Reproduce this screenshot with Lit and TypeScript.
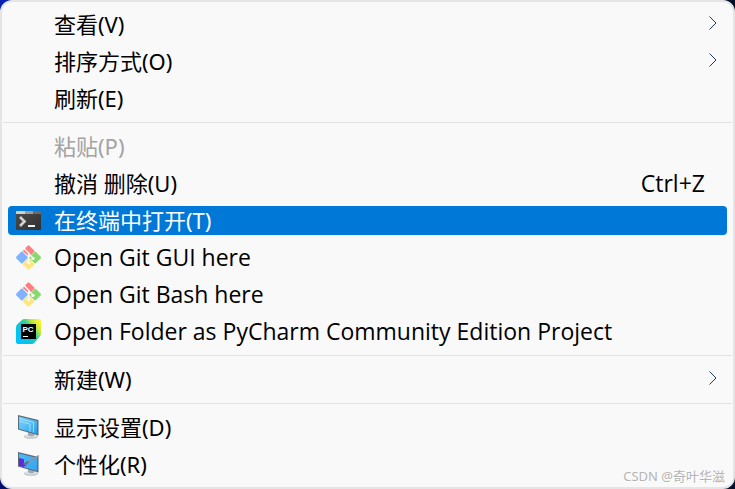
import { LitElement, html, css, svg, nothing, TemplateResult } from "lit";
import { customElement, state } from "lit/decorators.js";
import { classMap } from "lit/directives/class-map.js";

interface MenuEntry {
  label: string;
  icon?: TemplateResult;
  shortcut?: string;
  submenu?: boolean;
  disabled?: boolean;
  latin?: boolean;
}

const terminalIcon = svg`
  <defs>
    <linearGradient id="term" x1="0" y1="0" x2="1" y2="1">
      <stop offset="0" stop-color="#4d4d4d"/><stop offset="1" stop-color="#2f2f2f"/>
    </linearGradient>
  </defs>
  <rect x="0" y="3" width="25" height="19" rx="1" fill="url(#term)"/>
  <path d="M1 3h8v3H0V4a1 1 0 0 1 1-1z" fill="#d0d0d0"/>
  <path d="M9 3h8v3H9z" fill="#9b9b9b"/>
  <path d="M17 3h7a1 1 0 0 1 1 1v2h-8z" fill="#6b6b6b"/>
  <path d="M4 9L8.500 13.500L4 18" fill="none" stroke="#d2d2d2" stroke-width="2.600"/>
  <path d="M12 17h7v2h-7z" fill="#f2f2f2"/>`;

const gitIcon = svg`
  <path d="M6.300 6.600L12.200 12.500L6.300 18.400Q5.700 18.800 5.100 18.200L.4 13.400Q-.2 12.500 .4 11.600L5.100 6.800Q5.700 6.200 6.300 6.600z" fill="#80b3ff"/>
  <path d="M9.300 3.100L11.600 .7Q12.500 -.1 13.400 .7L18.300 5.600Q18.800 6.300 18.200 6.900L14.300 10.800L13.600 8.200L9.300 4.800z" fill="#ff8080"/>
  <path d="M8.200 4.400L12.400 8.600V11.300L6.700 6z" fill="#ff8080"/>
  <path d="M19 6.700Q19.500 6.400 20 6.900L24.600 11.600Q25.200 12.500 24.600 13.400L19.900 18.100Q19.300 18.700 18.600 18.200L13 12.700z" fill="#87d96c"/>
  <path d="M12.500 13L18.200 18.700Q18.700 19.300 18.200 19.900L13.400 24.300Q12.500 25.100 11.600 24.300L6.900 19.800Q6.400 19.200 6.800 18.700z" fill="#ffe680"/>
  <path d="M8 3.500L12.500 8V17M12.500 8.500L17 13" fill="none" stroke="#f9f9f9" stroke-width="1.300"/>
  <circle cx="17" cy="13.400" r="1.700" fill="#f9f9f9"/>
  <circle cx="12.500" cy="17.600" r="1.700" fill="#f9f9f9"/>`;

const pycharmIcon = svg`
  <defs>
    <linearGradient id="pc" x1=".15" y1=".75" x2=".95" y2=".15">
      <stop offset="0" stop-color="#00c4f8"/><stop offset=".3" stop-color="#10c5d4"/>
      <stop offset=".55" stop-color="#34cf9c"/><stop offset=".78" stop-color="#c0e63c"/>
      <stop offset="1" stop-color="#fcf232"/>
    </linearGradient>
  </defs>
  <path d="M0 8.500Q0 6.500 1.300 5.300L6 1Q7.200 0 8.700 0H23Q25 0 25 2V14.500Q25 16.100 24 17.200L18.500 23.700Q17.300 25 15.500 25H2Q0 25 0 23z" fill="url(#pc)"/>
  <rect x="5" y="5" width="15" height="15" fill="#000"/>
  <text x="6.500" y="13" class="mark">PC</text>
  <path d="M7 17h5v1h-5z" fill="#fff"/>`;

const screenBase = svg`
  <ellipse cx="15" cy="21.500" rx="7" ry="2.300" fill="#bfc5c9"/>
  <ellipse cx="15" cy="20.800" rx="6" ry="1.600" fill="#e1e5e7"/>
  <path d="M12 17l6 2v2q-3 1-6-.5z" fill="#a4abb0"/>`;

const displayIcon = svg`
  <defs>
    <linearGradient id="disp" x1="0" y1="0" x2="1" y2="1">
      <stop offset="0" stop-color="#79d3fb"/><stop offset=".5" stop-color="#54bcf4"/><stop offset="1" stop-color="#289de8"/>
    </linearGradient>
  </defs>
  ${screenBase}
  <path d="M2 0L22.500 5V20.500L2 14.500z" fill="#596b78"/>
  <path d="M3 1.500L21.200 6V19L3 13.700z" fill="url(#disp)"/>
  <path d="M3.500 3.800L17.500 7.500V17.500M3.500 6.300L14 9V16.500" fill="none" stroke="#b2e8ff" stroke-width="1" opacity=".8"/>`;

const personalizeIcon = svg`
  <defs>
    <linearGradient id="pers" x1="0" y1="0" x2="1" y2="1">
      <stop offset="0" stop-color="#4dbcf6"/><stop offset="1" stop-color="#35a1ef"/>
    </linearGradient>
  </defs>
  ${screenBase}
  <path d="M2 0L22.500 5V20.500L2 14.500z" fill="#596b78"/>
  <path d="M3 1.500L21.200 6V19L3 13.700z" fill="url(#pers)"/>
  <path d="M3 6L8 7.200V11.500L11 12.500L7.500 15L3 13.700z" fill="#6d21dc"/>
  <path d="M7 12L22.500 3L23.300 4.200L9.500 12.800z" fill="#8b98a1"/>
  <path d="M7 12.200L12 9L12.800 10.500L9 12.700z" fill="#5f6670"/>`;

const groups: MenuEntry[][] = [
  [
    { label: "查看(V)", submenu: true },
    { label: "排序方式(O)", submenu: true },
    { label: "刷新(E)" },
  ],
  [
    { label: "粘贴(P)", disabled: true },
    { label: "撤消 删除(U)", shortcut: "Ctrl+Z" },
    { label: "在终端中打开(T)", icon: terminalIcon },
    { label: "Open Git GUI here", icon: gitIcon, latin: true },
    { label: "Open Git Bash here", icon: gitIcon, latin: true },
    { label: "Open Folder as PyCharm Community Edition Project", icon: pycharmIcon, latin: true },
  ],
  [{ label: "新建(W)", submenu: true }],
  [
    { label: "显示设置(D)", icon: displayIcon },
    { label: "个性化(R)", icon: personalizeIcon },
  ],
];

@customElement("app-root")
export class AppRoot extends LitElement {
  @state() private active = "在终端中打开(T)";

  static styles = css`
    :host {
      display: block;
      position: relative;
      background: linear-gradient(135deg, #0a20b4 0%, #0a20b4 8%, #050f6e 40%, #04102a 60%);
      font-family: "Noto Sans", "Noto Sans CJK SC", sans-serif;
      font-size: 22px;
      color: #000;
    }
    .menu {
      display: flex;
      flex-direction: column;
      box-sizing: border-box;
      padding: 4px 0;
      border: 2px solid #e5e5e5;
      border-radius: 12px;
      background: #f9f9f9;
    }
    .line {
      height: 1px;
      margin: 5px 1px;
      border: 0;
      background: #e2e2e2;
    }
    .item {
      display: flex;
      align-items: center;
      height: 29px;
      margin: 4px 6px;
      padding: 0 8px;
      border: 0;
      border-radius: 4px;
      background: none;
      color: inherit;
      font: inherit;
      line-height: 29px;
      text-align: left;
      white-space: nowrap;
    }
    .item.active {
      background: #0078d7;
      color: #fff;
    }
    .item:disabled {
      color: #a3a3a3;
    }
    .slot {
      flex: none;
      display: flex;
      width: 26px;
      margin-right: 12px;
    }
    .icon {
      width: 25px;
      height: 25px;
      overflow: visible;
    }
    .mark {
      font: bold 8px "Liberation Sans", sans-serif;
      fill: #fff;
    }
    .label {
      flex: 1;
    }
    .latin,
    .shortcut {
      font-family: "Open Sans", sans-serif;
      font-size: 23px;
    }
    .shortcut {
      margin-right: 14px;
    }
    .chevron {
      width: 8px;
      height: 14px;
      margin: 0 2px 3px 0;
      fill: none;
      stroke: #1c3a5c;
    }
    .watermark {
      position: absolute;
      right: 10px;
      bottom: 3px;
      font-size: 13px;
      line-height: 20px;
      color: #b4b4b4;
      text-shadow: 1px 1px 0 #fff;
      pointer-events: none;
    }
  `;

  private renderItem(entry: MenuEntry) {
    return html`<button
      class=${classMap({ item: true, active: entry.label === this.active })}
      role="menuitem"
      ?disabled=${entry.disabled}
      aria-haspopup=${entry.submenu ? "menu" : nothing}
      @mouseenter=${() => (this.active = entry.label)}
    >
      <span class="slot">
        ${entry.icon
          ? html`<svg class="icon" viewBox="0 0 25 25" aria-hidden="true">${entry.icon}</svg>`
          : nothing}
      </span>
      <span class=${classMap({ label: true, latin: !!entry.latin })}>${entry.label}</span>
      ${entry.shortcut ? html`<span class="shortcut">${entry.shortcut}</span>` : nothing}
      ${entry.submenu
        ? html`<svg class="chevron" viewBox="0 0 8 14" aria-hidden="true"><path d="M0.500 0.500L7 7L0.500 13.500" /></svg>`
        : nothing}
    </button>`;
  }

  render() {
    return html`
      <div class="menu" role="menu">
        ${groups.map(
          (group, i) => html`${i ? html`<hr class="line" />` : nothing}${group.map((e) => this.renderItem(e))}`
        )}
      </div>
      <span class="watermark">CSDN @奇叶华滋</span>
    `;
  }
}
